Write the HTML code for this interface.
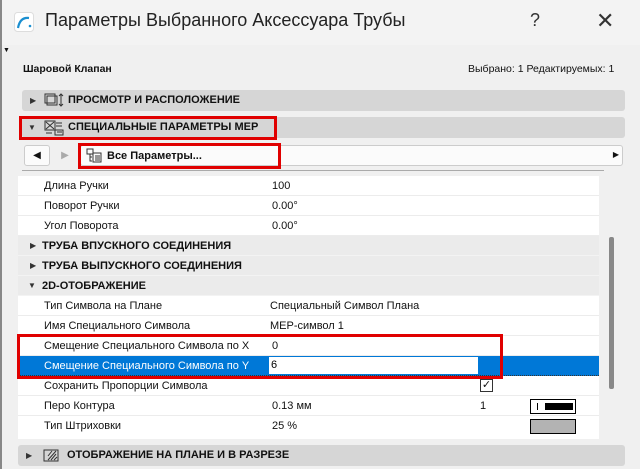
<!DOCTYPE html>
<html><head><meta charset="utf-8"><style>
*{margin:0;padding:0;box-sizing:border-box}
body{width:640px;height:469px;overflow:hidden;background:#f0f0f0;font-family:"Liberation Sans","DejaVu Sans",sans-serif;position:relative;font-size:11px;color:#111}
.a{position:absolute}
.title{left:0;top:0;width:640px;height:45px;background:#f3f3f3}
.sec{background:#d6d6d6;border-radius:3px;height:21px;font-weight:bold;font-size:11px;line-height:21px}
.row{position:absolute;left:18px;width:581px;height:20px;line-height:20px;border-bottom:1px solid #ececec;background:#fff}
.row span{position:absolute}
.grp{background:#ebebeb;font-weight:bold;border-bottom:1px solid #f3f3f3}
.tri{font-size:8px;color:#333}
.red{position:absolute;border:3px solid #e00000}
</style></head><body>
<div class="a title"></div>
<div class="a" style="left:0;top:0;width:2px;height:469px;background:#888"></div>
<svg class="a" style="left:14px;top:12px" width="20" height="20"><rect x="0.5" y="0.5" width="19" height="19" rx="3" fill="#fff" stroke="#ddd"/><path d="M4 16 Q6 5 15 6" fill="none" stroke="#1b8fd0" stroke-width="2.2"/><circle cx="16" cy="14" r="1.3" fill="#1b8fd0"/></svg>
<div class="a" style="left:45px;top:10px;font-size:18px;color:#222">Параметры Выбранного Аксессуара Трубы</div>
<div class="a" style="left:530px;top:10px;font-size:18px;color:#333">?</div>
<div class="a" style="left:596px;top:8px;font-size:22px;color:#333;font-weight:300">✕</div>
<div class="a" style="left:3px;top:47px;font-size:7px">▼</div>
<div class="a" style="left:23px;top:63px;font-weight:bold;font-size:10.5px">Шаровой Клапан</div>
<div class="a" style="left:468px;top:63px;font-size:10.5px">Выбрано: 1 Редактируемых: 1</div>

<div class="a sec" style="left:22px;top:90px;width:603px"><span class="tri" style="position:absolute;left:8px">▶</span>
<svg class="a" style="left:22px;top:3px" width="20" height="15"><rect x="1" y="1" width="10" height="9" fill="none" stroke="#333"/><rect x="3" y="3" width="10" height="9" fill="none" stroke="#333"/><path d="M17 1v12M15 3l2-2 2 2M15 11l2 2 2-2" fill="none" stroke="#333"/></svg>
<span style="position:absolute;left:46px">ПРОСМОТР И РАСПОЛОЖЕНИЕ</span></div>
<div class="a sec" style="left:22px;top:117px;width:603px"><span class="tri" style="position:absolute;left:6px">▼</span>
<svg class="a" style="left:22px;top:3px" width="20" height="16"><rect x="1" y="1" width="10" height="9" fill="none" stroke="#333"/><path d="M2 2l8 7M10 2l-8 7" stroke="#333"/><path d="M12 3h6M12 6h6M11 10h8v5h-8zM13 12h5M2 13h6" fill="none" stroke="#333"/></svg>
<span style="position:absolute;left:46px">СПЕЦИАЛЬНЫЕ ПАРАМЕТРЫ MEP</span></div>

<div class="a" style="left:24px;top:145px;width:26px;height:21px;background:#fbfbfb;border:1px solid #ccc;border-radius:3px;text-align:center;line-height:19px;font-size:10px">◀</div>
<div class="a" style="left:54px;top:145px;width:22px;height:21px;background:#f0f0f0;text-align:center;line-height:21px;font-size:10px;color:#aaa">▶</div>
<div class="a" style="left:80px;top:145px;width:543px;height:21px;background:#fbfbfb;border:1px solid #ccc;border-radius:3px"><span style="position:absolute;right:3px;top:4px;font-size:8px">▶</span></div>
<svg class="a" style="left:86px;top:148px" width="16" height="15"><rect x="1" y="1" width="6" height="5" fill="none" stroke="#333"/><path d="M4 6v7h2M4 9h2M7 5h8v9H7zM9 8h5M9 10h5M9 12h5" fill="none" stroke="#333"/></svg>
<div class="a" style="left:107px;top:150px;font-weight:bold;font-size:11px">Все Параметры...</div>
<div class="a" style="left:22px;top:170px;width:582px;height:1px;background:#aaa"></div>

<div class="a" style="left:18px;top:176px;width:581px;height:263px;background:#fff"></div>
<div class="row" style="top:176px"><span style="left:26px">Длина Ручки</span><span style="left:254px">100</span></div>
<div class="row" style="top:196px"><span style="left:26px">Поворот Ручки</span><span style="left:254px">0.00°</span></div>
<div class="row" style="top:216px"><span style="left:26px">Угол Поворота</span><span style="left:254px">0.00°</span></div>
<div class="row grp" style="top:236px"><span class="tri" style="left:12px">▶</span><span style="left:24px">ТРУБА ВПУСКНОГО СОЕДИНЕНИЯ</span></div>
<div class="row grp" style="top:256px"><span class="tri" style="left:12px">▶</span><span style="left:24px">ТРУБА ВЫПУСКНОГО СОЕДИНЕНИЯ</span></div>
<div class="row grp" style="top:276px"><span class="tri" style="left:10px">▼</span><span style="left:24px">2D-ОТОБРАЖЕНИЕ</span></div>
<div class="row" style="top:296px"><span style="left:26px">Тип Символа на Плане</span><span style="left:252px">Специальный Символ Плана</span></div>
<div class="row" style="top:316px"><span style="left:26px">Имя Специального Символа</span><span style="left:252px">MEP-символ 1</span></div>
<div class="row" style="top:336px"><span style="left:26px">Смещение Специального Символа по X</span><span style="left:254px">0</span></div>
<div class="row" style="top:356px;background:#0078d7;color:#fff;border-bottom:1px dotted #333"><span style="left:26px">Смещение Специального Символа по Y</span><span style="left:251px;top:1px;width:209px;height:17px;background:#fff;color:#000;line-height:17px;padding-left:2px">6</span></div>
<div class="row" style="top:376px"><span style="left:462px;top:3px;width:13px;height:13px;border:1px solid #333;line-height:11px;text-align:center;font-size:11px">✓</span><span style="left:26px">Сохранить Пропорции Символа</span></div>
<div class="row" style="top:396px"><span style="left:26px">Перо Контура</span><span style="left:254px">0.13 мм</span><span style="left:462px">1</span><span style="left:512px;top:3px;width:46px;height:15px;border:1px solid #000"><i style="position:absolute;left:6px;top:3px;width:1px;height:7px;background:#000"></i><i style="position:absolute;left:14px;top:3px;width:28px;height:7px;background:#000"></i></span></div>
<div class="row" style="top:416px;border-bottom:none"><span style="left:26px">Тип Штриховки</span><span style="left:254px">25 %</span><span style="left:512px;top:3px;width:46px;height:15px;border:1px solid #000;background:radial-gradient(circle,#000 0.7px,#fff 0.8px) 0 0/2px 2px"></span></div>

<div class="a" style="left:609px;top:237px;width:5px;height:152px;background:#888;border-radius:2px"></div>

<div class="a sec" style="left:18px;top:445px;width:607px;height:21px"><span class="tri" style="position:absolute;left:8px">▶</span>
<svg class="a" style="left:24px;top:3px" width="20" height="15"><path d="M2 2h14v11H2z" fill="none" stroke="#333"/><path d="M6 12l8-9M9 12l5-6M12 12l3-3M6 8l4-5" stroke="#333"/></svg>
<span style="position:absolute;left:49px">ОТОБРАЖЕНИЕ НА ПЛАНЕ И В РАЗРЕЗЕ</span></div>

<div class="red" style="left:19px;top:116px;width:258px;height:24px"></div>
<div class="red" style="left:78px;top:143px;width:203px;height:26px"></div>
<div class="red" style="left:17px;top:334px;width:486px;height:45px"></div>
</body></html>
